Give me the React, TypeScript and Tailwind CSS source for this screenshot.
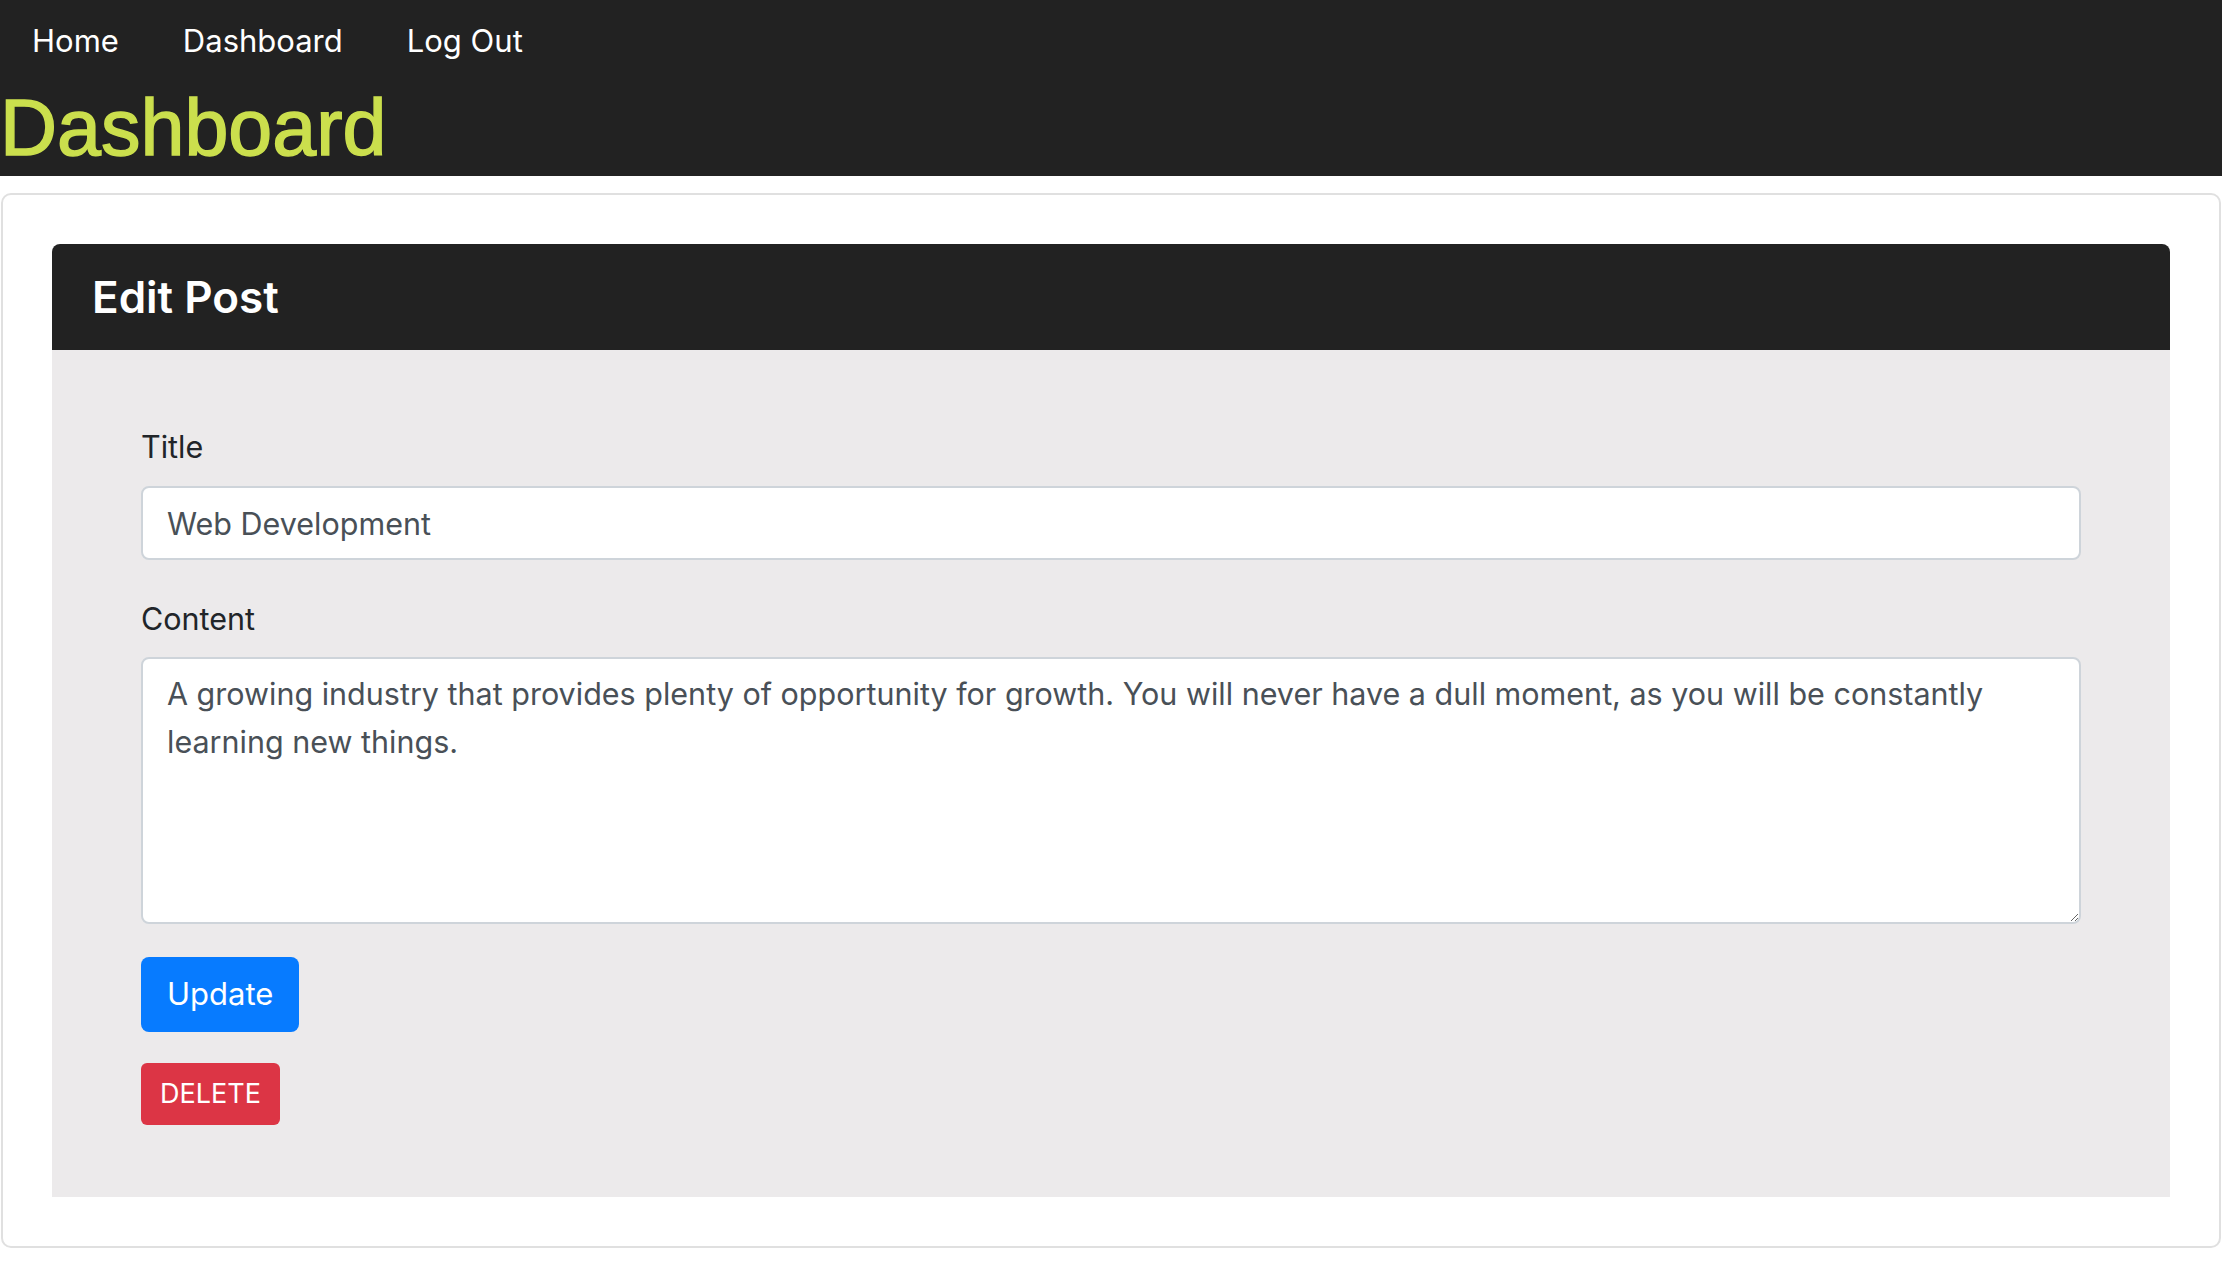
import React from 'react'

const sans = "font-['Inter','Noto_Sans',sans-serif]"

function NavBar() {
    return (
        <header className="bg-[#222222] h-[176px] flex flex-col">
            <nav className={`flex items-center gap-[64px] pl-[32px] h-[82px] text-[31px] text-white ${sans}`}>
                <a href="#">Home</a>
                <a href="#">Dashboard</a>
                <a href="#">Log Out</a>
            </nav>
            <h1 className="font-['Liberation_Sans','Arial',sans-serif] text-[79px] leading-[92px] text-[#cbdf4d] [-webkit-text-stroke:1.5px_#cbdf4d]">
                Dashboard
            </h1>
        </header>
    )
}

export default function App() {
    return (
        <div className={`min-h-screen bg-white ${sans}`}>
            <NavBar />

            <div className="mt-[17px] mx-[1px] border-2 border-[#e0e0e0] rounded-[10px] p-[49px]">
                <div className="rounded-t-[8px] bg-[#222222] h-[106px] flex items-center px-[40px]">
                    <h3 className="text-[44px] font-semibold text-white">Edit Post</h3>
                </div>

                <form className="bg-[#eceaeb] px-[89px] pt-[74px] pb-[72px]">
                    <label className="block text-[30.5px] leading-[45px] text-[#212529] mb-[17px]">Title</label>
                    <input
                        className="block w-full h-[74px] rounded-[8px] border-2 border-[#ced4da] bg-white px-[24px] text-[30.5px] text-[#495057] outline-none"
                        defaultValue="Web Development"
                    />

                    <label className="block text-[30.5px] leading-[45px] text-[#212529] mt-[36px] mb-[16px]">Content</label>
                    <textarea
                        className="block w-full h-[267px] rounded-[8px] border-2 border-[#ced4da] bg-white px-[24px] py-[11px] text-[30.5px] leading-[48px] text-[#495057] outline-none"
                        defaultValue="A growing industry that provides plenty of opportunity for growth. You will never have a dull moment, as you will be constantly learning new things."
                    />

                    <button
                        type="button"
                        className="block mt-[33px] h-[75px] px-[26px] rounded-[8px] bg-[#077bff] text-[31px] text-white"
                    >
                        Update
                    </button>
                    <button
                        type="button"
                        className="block mt-[31px] h-[62px] px-[19px] rounded-[6px] bg-[#dc3545] text-[27px] text-white"
                    >
                        DELETE
                    </button>
                </form>
            </div>
        </div>
    )
}
